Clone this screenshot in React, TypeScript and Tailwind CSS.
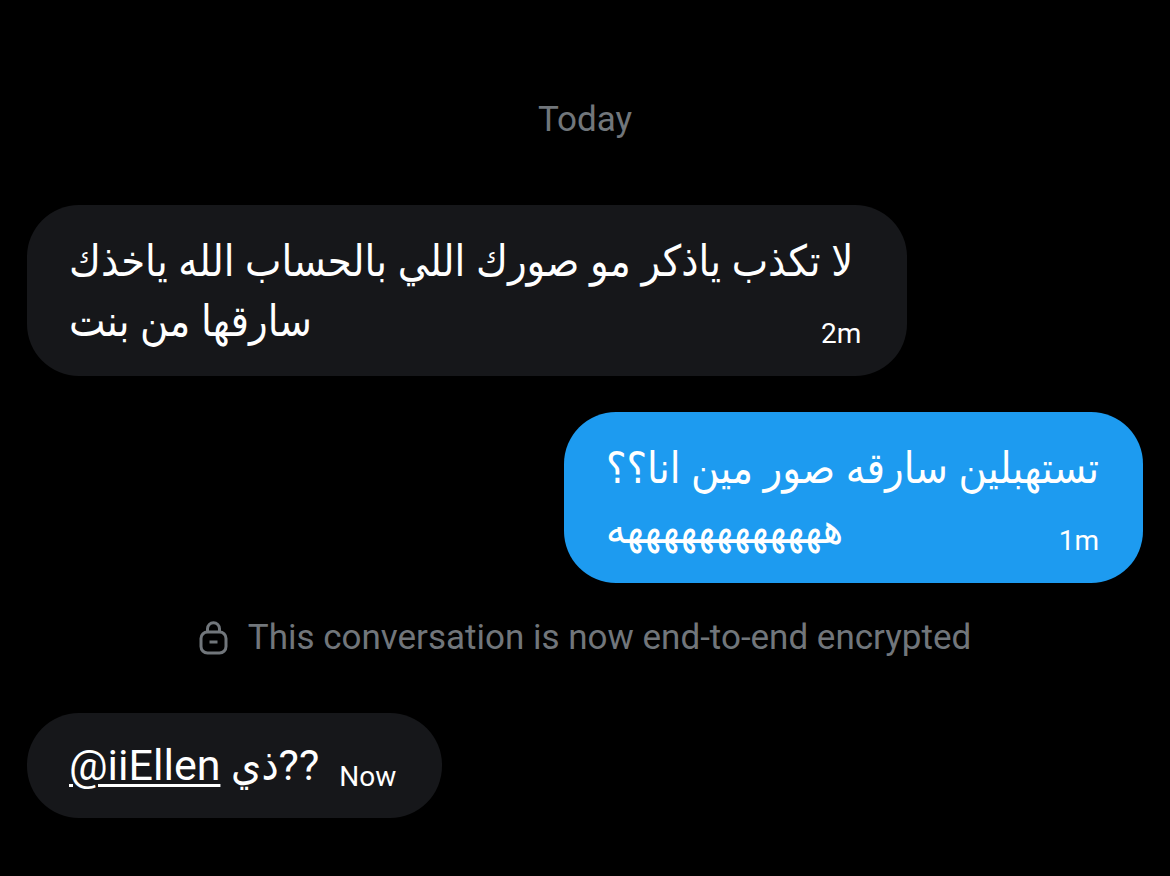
import type { ReactNode } from "react";
import clsx from "clsx";

type Message = {
  id: string;
  mine?: boolean;
  time: string;
  lines: ReactNode[];
};

const opening: Message[] = [
  {
    id: "m1",
    time: "2m",
    lines: ["لا تكذب ياذكر مو صورك اللي بالحساب الله ياخذك", "سارقها من بنت"],
  },
  {
    id: "m2",
    mine: true,
    time: "1m",
    lines: ["تستهبلين سارقه صور مين انا؟؟", "ه".repeat(13)],
  },
];

function LockIcon() {
  return (
    <svg width="29" height="34" viewBox="0 0 29 34" fill="none" stroke="currentColor" strokeWidth="3" aria-hidden="true">
      <rect x="2" y="11" width="25" height="21" rx="6.5" />
      <path d="M8.5 11V7.8a6 6 0 0 1 12 0V11" />
      <path d="M10.5 21h8" />
    </svg>
  );
}

function Bubble({ message }: { message: Message }) {
  const { mine, time, lines } = message;
  const multiline = lines.length > 1;

  return (
    <div
      className={clsx(
        "grid rounded-[52px] pl-[42px] text-[43px] leading-[60px] text-white",
        mine ? "self-end bg-[#1d9bf0] pr-11" : "self-start bg-[#16171a] pr-[46px]",
        multiline ? "pt-[26px] pb-[25px]" : "grid-cols-[auto_auto] gap-5 pt-[22px] pb-[23px]",
      )}
    >
      <div
        className={clsx(
          "row-start-1",
          multiline && "col-start-1",
          multiline && !mine && "pr-2",
        )}
      >
        {lines.map((line, i) => (
          <p key={i} className="whitespace-nowrap">
            {line}
          </p>
        ))}
      </div>
      {/* the time shares the last text line */}
      <time
        className={clsx(
          "row-start-1 self-end justify-self-end text-[28px]",
          multiline ? "col-start-1 leading-[34px]" : "leading-9",
        )}
      >
        {time}
      </time>
    </div>
  );
}

export default function App() {
  return (
    <main className="min-h-screen bg-black px-[27px] pt-[97px] pb-14 font-['Roboto','DejaVu_Sans_Condensed','DejaVu_Sans',sans-serif]">
      <div className="flex flex-col">
        <p className="text-center text-[35px] leading-[46px] text-[#71767b]">Today</p>

        <div className="mt-[62px] flex flex-col gap-9">
          {opening.map((m) => (
            <Bubble key={m.id} message={m} />
          ))}
        </div>

        <div className="mt-8 flex items-center justify-center gap-5 text-[35px] leading-[46px] text-[#71767b]">
          <LockIcon />
          <p>This conversation is now end-to-end encrypted</p>
        </div>

        <div className="mt-[52px] flex flex-col">
          <Bubble
            message={{
              id: "m3",
              time: "Now",
              lines: [
                <>
                  <a href="#iiEllen" className="underline decoration-3 underline-offset-4">
                    @iiEllen
                  </a>{" "}
                  ذي??
                </>,
              ],
            }}
          />
        </div>
      </div>
    </main>
  );
}
